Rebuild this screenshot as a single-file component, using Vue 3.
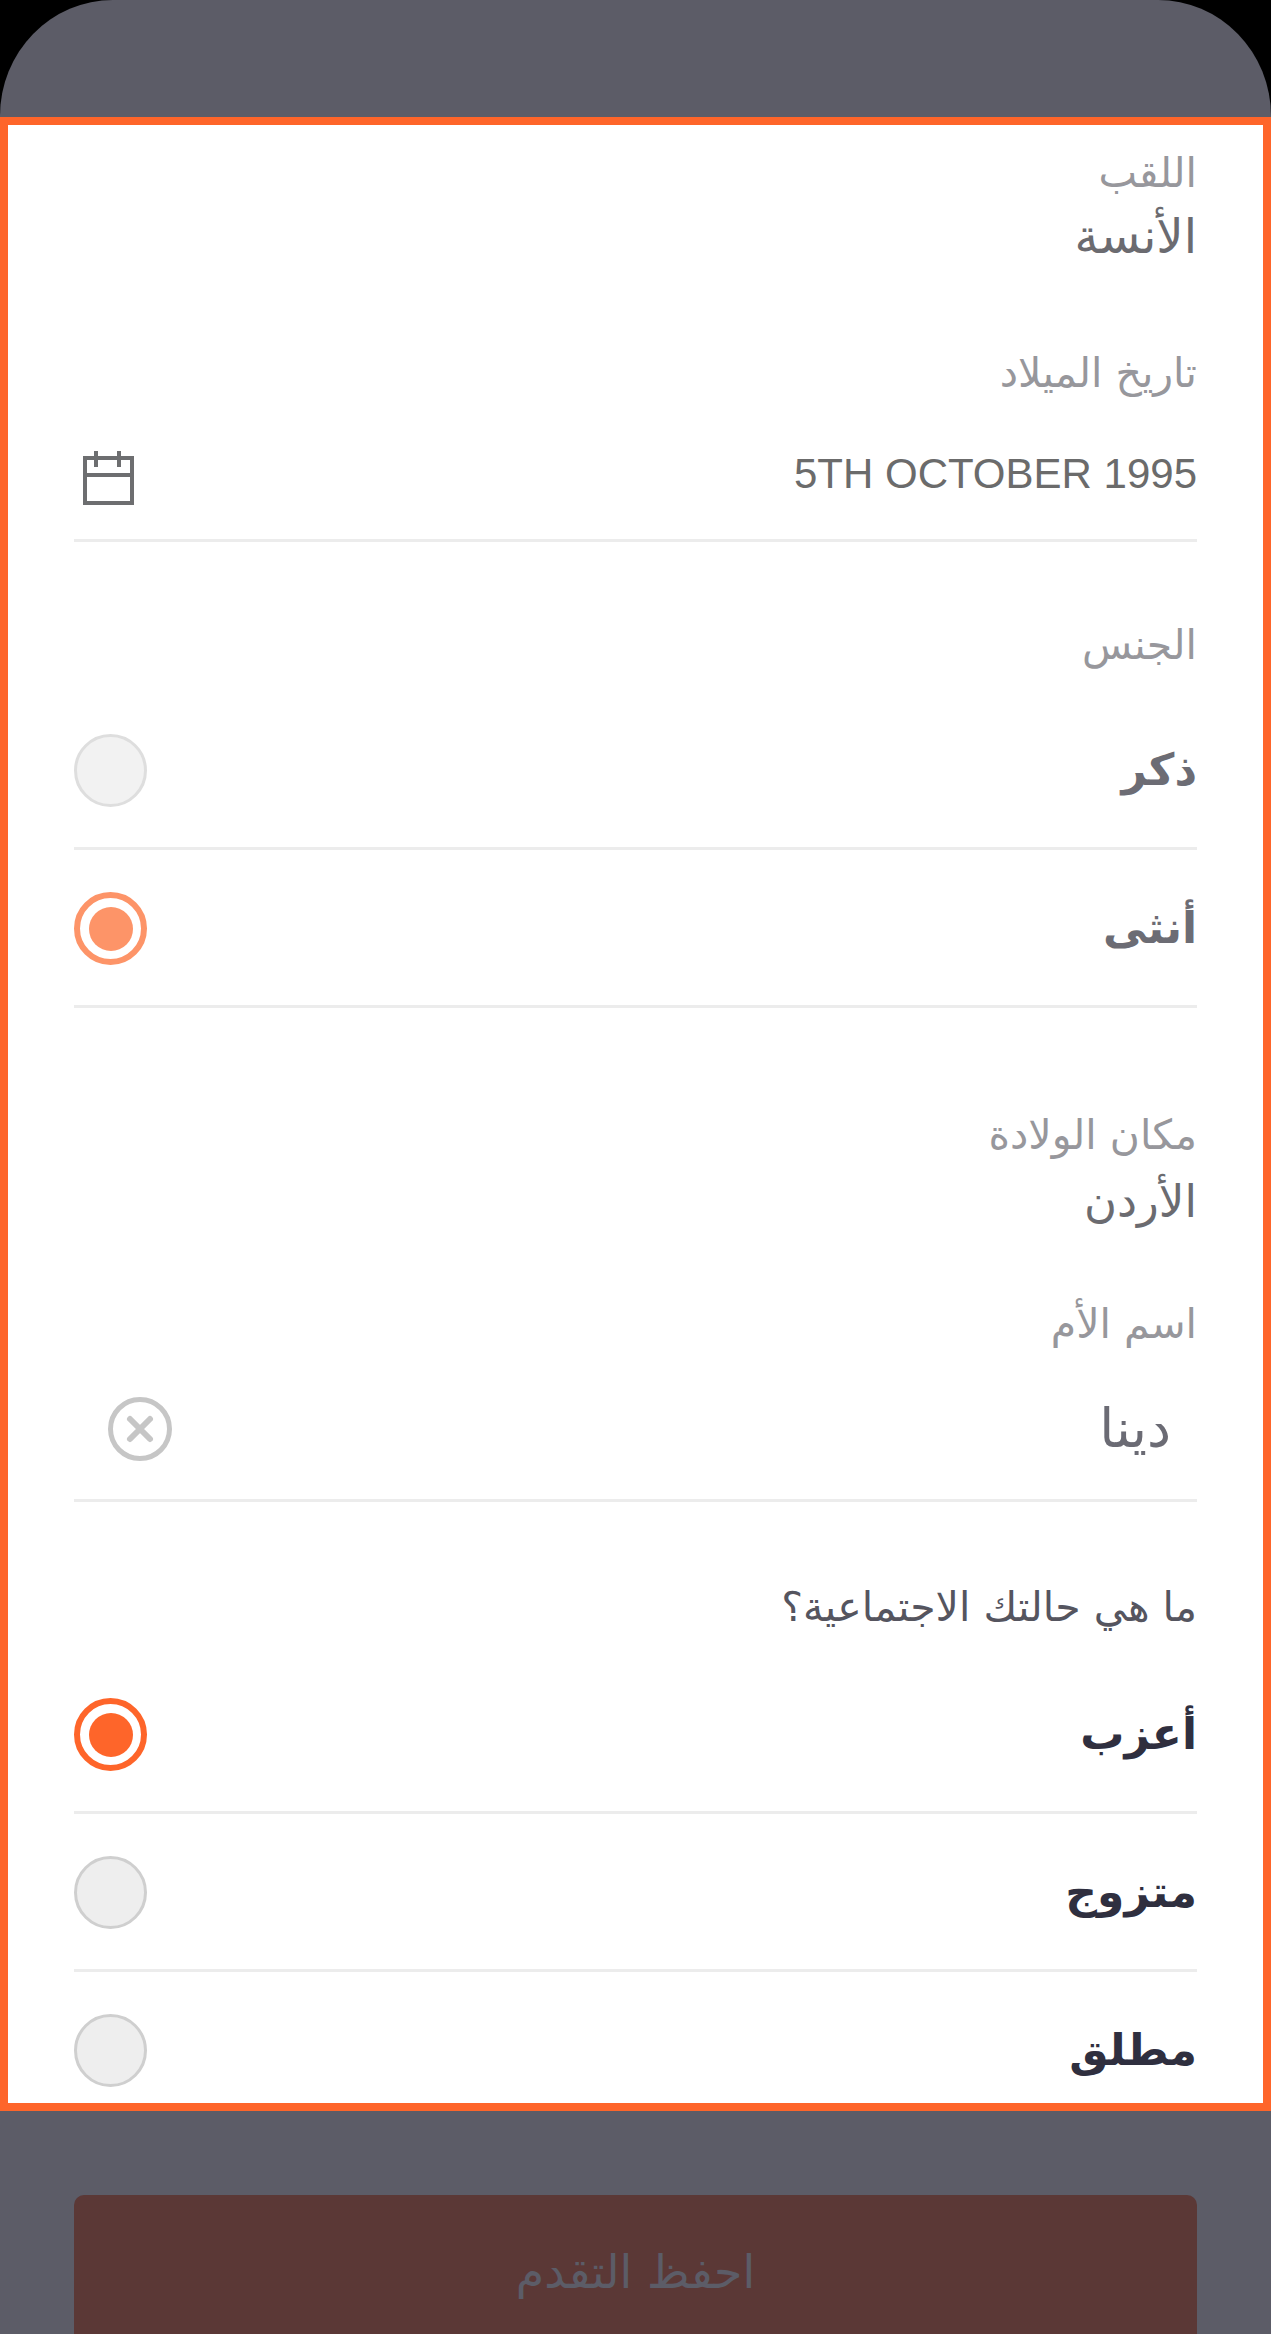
<script setup>
const genderOptions = [
  { label: 'ذكر', checked: false },
  { label: 'أنثى', checked: true },
]
const statusOptions = [
  { label: 'أعزب', checked: true },
  { label: 'متزوج', checked: false },
  { label: 'مطلق', checked: false },
]
</script>

<template>
  <div class="screen">
    <div class="device">
      <header class="top"></header>
      <main class="panel" dir="rtl">
        <p class="label first">اللقب</p>
        <p class="value">الأنسة</p>

        <p class="label dob">تاريخ الميلاد</p>
        <div class="input-row date-row">
          <span class="date" dir="ltr">5TH OCTOBER 1995</span>
          <svg class="calendar" width="59" height="60" viewBox="0 0 59 60" fill="none" stroke="#6d6e70" stroke-width="4">
            <rect x="6" y="9" width="47" height="45" />
            <path d="M6 26h47M17 2v16M40 2v16" />
          </svg>
        </div>

        <p class="label gender">الجنس</p>
        <div class="options faded first-options">
          <div v-for="o in genderOptions" :key="o.label" class="option">
            <span class="option-text">{{ o.label }}</span>
            <span class="radio" :class="{ on: o.checked }"></span>
          </div>
        </div>

        <p class="label birth">مكان الولادة</p>
        <p class="value plain">الأردن</p>

        <p class="label mother">اسم الأم</p>
        <div class="input-row name-row">
          <span class="name">دينا</span>
          <svg class="clear" width="64" height="64" viewBox="0 0 64 64" fill="none" stroke="#c6c6c6" stroke-linecap="round">
            <circle cx="32" cy="32" r="29.500" stroke-width="5" />
            <path d="M22 22l20 20M42 22L22 42" stroke-width="6" />
          </svg>
        </div>

        <p class="label question">ما هي حالتك الاجتماعية؟</p>
        <div class="options status-options">
          <div v-for="o in statusOptions" :key="o.label" class="option">
            <span class="option-text">{{ o.label }}</span>
            <span class="radio" :class="{ on: o.checked }"></span>
          </div>
        </div>
      </main>
      <footer class="bottom">
        <button class="save" dir="rtl">احفظ التقدم</button>
      </footer>
    </div>
  </div>
</template>

<style>
html, body { margin: 0; background: #000; }
</style>

<style scoped>
.screen {
  width: 1271px;
  height: 2334px;
  background: #000;
  overflow: hidden;
  font-family: "DejaVu Sans", sans-serif;
}
.device {
  height: 100%;
  background: #5c5c67;
  border-radius: 113px 113px 0 0 / 116px 116px 0 0;
  display: flex;
  flex-direction: column;
}
.top { height: 117px; flex: none; }
.panel {
  box-sizing: border-box;
  height: 1994px;
  flex: none;
  border: 8px solid #fe652a;
  background: #fff;
  padding: 0 66px;
  overflow: hidden;
}
p { margin: 0; }
.label {
  font-size: 41px;
  line-height: 50px;
  color: #97979c;
}
.first { margin-top: 23px; }
.value {
  margin-top: 13px;
  font-size: 48px;
  line-height: 50px;
  color: #6b6b70;
}
.plain { margin-top: 17px; font-size: 45px; }
.dob { margin-top: 87px; }
.gender { margin-top: 78px; }
.birth { margin-top: 102px; }
.mother { margin-top: 72px; }
.question { margin-top: 80px; color: #55555f; }
.input-row {
  box-sizing: border-box;
  display: flex;
  align-items: center;
  justify-content: space-between;
  border-bottom: 3px solid #ececec;
}
.date-row { height: 144px; }
.date {
  font-family: "Liberation Sans", sans-serif;
  font-size: 42px;
  color: #6b6b6b;
  margin-top: 11px;
}
.calendar { margin-left: 5px; margin-top: 21px; }
.name-row { height: 153px; padding-right: 26px; }
.name { font-size: 54px; color: #6b6b74; margin-top: 8px; }
.clear { margin-left: 34px; margin-top: 10px; }
.first-options { margin-top: 22px; }
.status-options { margin-top: 24px; }
.option {
  box-sizing: border-box;
  height: 158px;
  display: flex;
  align-items: center;
  justify-content: space-between;
  border-bottom: 3px solid #ececec;
}
.option-text {
  font-size: 44px;
  font-weight: 700;
  color: #2f2f3f;
}
.radio {
  box-sizing: border-box;
  width: 73px;
  height: 73px;
  margin-top: 2px;
  border-radius: 50%;
  background: #eeeeee;
  border: 3px solid #cfcfcf;
  position: relative;
}
.radio.on {
  background: #fff;
  border: 6px solid #fe652a;
}
.radio.on::after {
  content: "";
  position: absolute;
  inset: 8.5px;
  border-radius: 50%;
  background: #fe652a;
}
.faded .option-text { color: #6c6c74; }
.faded .radio { background: #f2f2f2; border-color: #dedede; }
.faded .radio.on { background: #fff; border-color: #fd9468; }
.faded .radio.on::after { background: #fd9468; }
.bottom {
  flex: 1;
  display: flex;
  padding: 84px 74px 0;
}
.save {
  flex: 1;
  border: 0;
  border-radius: 10px 10px 0 0;
  background: #5b3836;
  color: #5c5c67;
  font-family: inherit;
  font-size: 46px;
  padding-top: 16px;
}
</style>
